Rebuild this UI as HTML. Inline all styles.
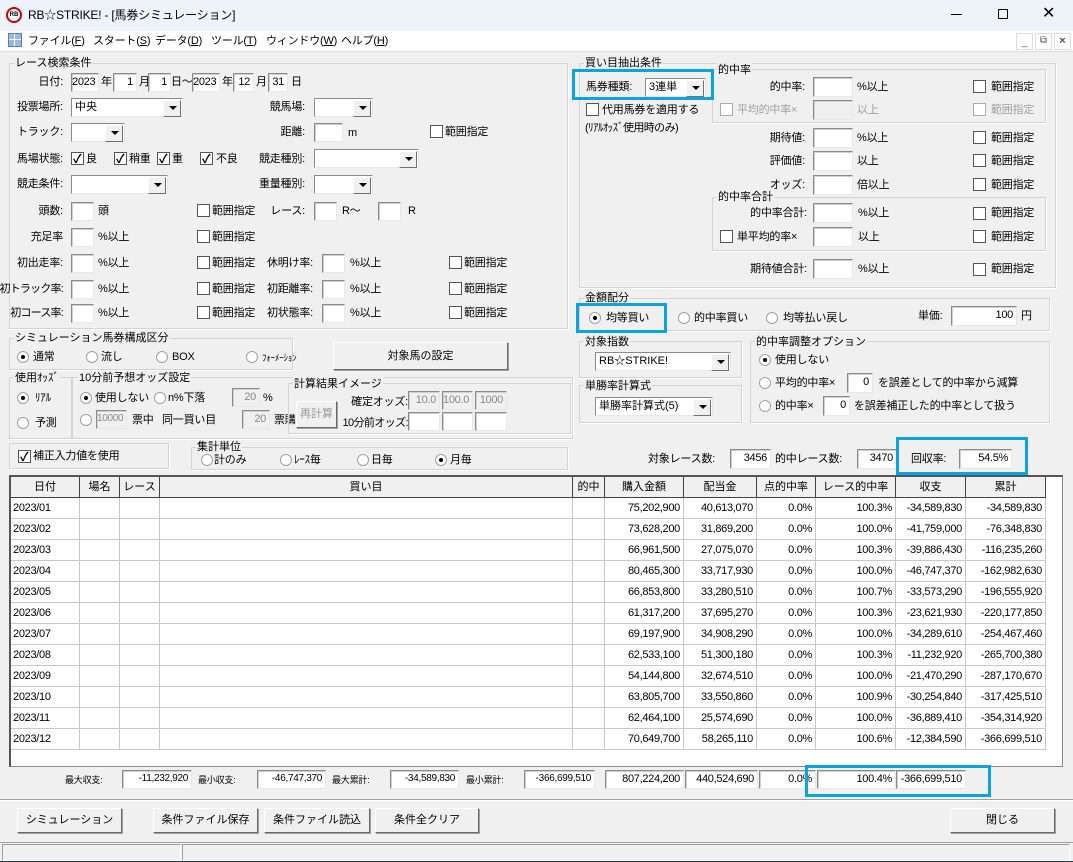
<!DOCTYPE html><html><head><meta charset="utf-8"><style>
*{box-sizing:border-box;margin:0;padding:0}
body{width:1073px;height:862px;position:relative;background:#f0f0f0;font-family:"Liberation Sans","Noto Sans CJK JP",sans-serif;font-size:11px;color:#000;overflow:hidden}
div{position:absolute}
.t{white-space:nowrap;line-height:14px;font-size:11px;letter-spacing:-0.2px}
.r{text-align:right}
.gr{color:#a0a0a0}
.i{background:#fff;border:1px solid;border-color:#8a8a8a #e8e8e8 #e8e8e8 #8a8a8a;box-shadow:inset 1px 1px 0 #d0d0d0;font-size:11px;line-height:16px;text-align:right;padding-right:3px;white-space:nowrap;letter-spacing:-0.3px}
.i.d{background:#f0f0f0;color:#888}
.c{background:#fff;border:1px solid;border-color:#8a8a8a #e8e8e8 #e8e8e8 #8a8a8a;height:19px;line-height:16px;padding-left:3px;white-space:nowrap;font-size:11px}
.c::after{content:"";position:absolute;right:1px;top:1px;width:16px;height:15px;background:#f0f0f0;border:1px solid;border-color:#fff #707070 #707070 #fff}
.c::before{content:"";position:absolute;right:5px;top:7px;border:4px solid transparent;border-top:4px solid #000;z-index:2;border-bottom:0}
.cb{width:13px;height:13px;background:#fff;border:1px solid #555}
.cb.k::after{content:"✓";position:absolute;left:1px;top:-3px;font-size:12px;font-weight:bold}
.cb.d{border-color:#aaa}
.rb{width:12px;height:12px;border-radius:50%;background:#fff;border:1px solid #a0a0a0}
.rb.k::after{content:"";position:absolute;left:3px;top:3px;width:4px;height:4px;border-radius:50%;background:#000}
.g{border:1px solid #d4d4d4;box-shadow:1px 1px 0 #fff}
.gt{background:#f0f0f0;padding:0 1px;line-height:14px;white-space:nowrap;font-size:11px}
.b{background:#f0f0f0;border:1px solid;border-color:#fff #696969 #696969 #fff;box-shadow:1px 1px 0 #a0a0a0;text-align:center;white-space:nowrap;font-size:11px}
.blue{border:3px solid #0aa3e6}
.gh{background:#f0f0f0;border-right:1px solid #444;border-bottom:1px solid #444;text-align:center;line-height:20px;height:21px;font-size:11px}
.gc{border-right:1px solid #c8c8c8;border-bottom:1px solid #c8c8c8;height:21px;line-height:20px;text-align:right;padding-right:3px;white-space:nowrap;font-size:11px;letter-spacing:-0.3px}
</style></head><body>
<div style="left:0;top:0;width:1073px;height:31px;background:#eef2f9"></div>
<div style="left:6px;top:7px;width:16px;height:16px;border-radius:50%;border:2px solid #c00;background:#fff;font-size:6px;line-height:12px;text-align:center;font-weight:bold">RB</div>
<div class="t" style="left:28px;top:8px;font-size:12px">RB☆STRIKE! - [馬券シミュレーション]</div>
<div style="left:951px;top:14px;width:11px;height:1px;background:#000"></div>
<div style="left:998px;top:9px;width:10px;height:10px;border:1px solid #000;border-radius:1px"></div>
<div class="t" style="left:1042px;top:5px;font-size:16px;line-height:18px">✕</div>
<div style="left:0;top:31px;width:1073px;height:20px;background:#fff"></div>
<div style="left:8px;top:33px;width:14px;height:14px;background:#9bb8e0;border:1px solid #5a7fb8;background-image:linear-gradient(#fff 0 0),linear-gradient(#fff 0 0);background-size:1px 100%,100% 1px;background-position:5px 0,0 5px;background-repeat:no-repeat"></div>
<div class="t" style="left:28px;top:34px">ファイル(<u>F</u>)</div>
<div class="t" style="left:93px;top:34px">スタート(<u>S</u>)</div>
<div class="t" style="left:155px;top:34px">データ(<u>D</u>)</div>
<div class="t" style="left:211px;top:34px">ツール(<u>T</u>)</div>
<div class="t" style="left:266px;top:34px">ウィンドウ(<u>W</u>)</div>
<div class="t" style="left:341px;top:34px">ヘルプ(<u>H</u>)</div>
<div style="left:1016px;top:33px;width:17px;height:17px;border:1px solid #ddd;font-size:10px;text-align:center;line-height:18px;color:#555">_</div>
<div style="left:1035px;top:33px;width:17px;height:17px;border:1px solid #ddd;font-size:10px;text-align:center;line-height:14px;color:#555">⧉</div>
<div style="left:1054px;top:33px;width:17px;height:17px;border:1px solid #ddd;font-size:11px;text-align:center;line-height:15px;color:#555;font-weight:bold">×</div>
<div style="left:0;top:51px;width:1073px;height:1px;background:#ddd"></div>

<div class="g" style="left:9px;top:63px;width:559px;height:266px"></div>
<div class="gt" style="left:14px;top:56px">レース検索条件</div>
<div class="t r" style="right:1010px;top:75px">日付:</div>
<div class="i" style="left:71px;top:73px;width:28px;height:19px">2023</div><div class="t" style="left:101px;top:75px">年</div>
<div class="i" style="left:113px;top:73px;width:24px;height:19px">1</div><div class="t" style="left:139px;top:75px">月</div>
<div class="i" style="left:148px;top:73px;width:23px;height:19px">1</div><div class="t" style="left:171px;top:75px">日～</div>
<div class="i" style="left:192px;top:73px;width:28px;height:19px">2023</div><div class="t" style="left:222px;top:75px">年</div>
<div class="i" style="left:233px;top:73px;width:21px;height:19px">12</div><div class="t" style="left:256px;top:75px">月</div>
<div class="i" style="left:268px;top:73px;width:20px;height:19px">31</div><div class="t" style="left:291px;top:75px">日</div>

<div class="t r" style="right:1010px;top:100px">投票場所:</div><div class="c" style="left:71px;top:98px;width:112px">中央</div>
<div class="t r" style="right:768px;top:100px">競馬場:</div><div class="c" style="left:314px;top:98px;width:59px"></div>
<div class="t r" style="right:1010px;top:125px">トラック:</div><div class="c" style="left:71px;top:123px;width:54px"></div>
<div class="t r" style="right:768px;top:125px">距離:</div><div class="i" style="left:314px;top:123px;width:29px;height:19px"></div><div class="t" style="left:348px;top:126px">m</div>
<div class="cb" style="left:430px;top:125px"></div><div class="t" style="left:445px;top:125px">範囲指定</div>
<div class="t r" style="right:1010px;top:152px">馬場状態:</div>
<div class="cb k" style="left:71px;top:152px"></div><div class="t" style="left:86px;top:152px">良</div>
<div class="cb k" style="left:114px;top:152px"></div><div class="t" style="left:129px;top:152px">稍重</div>
<div class="cb k" style="left:157px;top:152px"></div><div class="t" style="left:172px;top:152px">重</div>
<div class="cb k" style="left:200px;top:152px"></div><div class="t" style="left:216px;top:152px">不良</div>
<div class="t r" style="right:768px;top:152px">競走種別:</div><div class="c" style="left:314px;top:149px;width:105px"></div>
<div class="t r" style="right:1010px;top:177px">競走条件:</div><div class="c" style="left:71px;top:175px;width:97px"></div>
<div class="t r" style="right:768px;top:177px">重量種別:</div><div class="c" style="left:314px;top:175px;width:59px"></div>
<div class="t r" style="right:1010px;top:204px">頭数:</div><div class="i" style="left:71px;top:202px;width:23px;height:19px"></div><div class="t" style="left:98px;top:204px">頭</div>
<div class="cb" style="left:197px;top:204px"></div><div class="t" style="left:212px;top:204px">範囲指定</div>
<div class="t r" style="right:768px;top:204px">レース:</div><div class="i" style="left:314px;top:202px;width:23px;height:19px"></div><div class="t" style="left:342px;top:204px">R～</div>
<div class="i" style="left:378px;top:202px;width:23px;height:19px"></div><div class="t" style="left:408px;top:204px">R</div>
<div class="t r" style="right:1010px;top:230px">充足率</div><div class="i" style="left:71px;top:228px;width:23px;height:19px"></div><div class="t" style="left:98px;top:230px">%以上</div>
<div class="cb" style="left:197px;top:230px"></div><div class="t" style="left:212px;top:230px">範囲指定</div>
<div class="t r" style="right:1010px;top:256px">初出走率:</div><div class="i" style="left:71px;top:254px;width:23px;height:19px"></div><div class="t" style="left:98px;top:256px">%以上</div>
<div class="cb" style="left:197px;top:256px"></div><div class="t" style="left:212px;top:256px">範囲指定</div>
<div class="t r" style="right:760px;top:256px">休明け率:</div><div class="i" style="left:322px;top:254px;width:23px;height:19px"></div><div class="t" style="left:350px;top:256px">%以上</div>
<div class="cb" style="left:449px;top:256px"></div><div class="t" style="left:464px;top:256px">範囲指定</div>
<div class="t r" style="right:1010px;top:282px;letter-spacing:-0.8px">初トラック率:</div><div class="i" style="left:71px;top:280px;width:23px;height:19px"></div><div class="t" style="left:98px;top:282px">%以上</div>
<div class="cb" style="left:197px;top:282px"></div><div class="t" style="left:212px;top:282px">範囲指定</div>
<div class="t r" style="right:760px;top:282px">初距離率:</div><div class="i" style="left:322px;top:280px;width:23px;height:19px"></div><div class="t" style="left:350px;top:282px">%以上</div>
<div class="cb" style="left:449px;top:282px"></div><div class="t" style="left:464px;top:282px">範囲指定</div>
<div class="t r" style="right:1010px;top:306px;letter-spacing:-0.8px">初コース率:</div><div class="i" style="left:71px;top:304px;width:23px;height:19px"></div><div class="t" style="left:98px;top:306px">%以上</div>
<div class="cb" style="left:197px;top:306px"></div><div class="t" style="left:212px;top:306px">範囲指定</div>
<div class="t r" style="right:760px;top:306px">初状態率:</div><div class="i" style="left:322px;top:304px;width:23px;height:19px"></div><div class="t" style="left:350px;top:306px">%以上</div>
<div class="cb" style="left:449px;top:306px"></div><div class="t" style="left:464px;top:306px">範囲指定</div>

<div class="g" style="left:579px;top:63px;width:477px;height:225px"></div>
<div class="gt" style="left:584px;top:56px">買い目抽出条件</div>
<div class="g" style="left:712px;top:69px;width:334px;height:54px"></div>
<div class="gt" style="left:717px;top:63px">的中率</div>
<div class="blue" style="left:572px;top:69px;width:142px;height:31px"></div>
<div class="t" style="left:586px;top:80px">馬券種類:</div><div class="c" style="left:645px;top:78px;width:61px">3連単</div>
<div class="cb" style="left:586px;top:103px"></div><div class="t" style="left:602px;top:103px">代用馬券を適用する</div>
<div class="t" style="left:585px;top:121px;letter-spacing:-0.6px">(ﾘｱﾙｵｯｽﾞ使用時のみ)</div>
<div class="t r" style="right:268px;top:80px">的中率:</div><div class="i" style="left:813px;top:77px;width:40px;height:20px"></div><div class="t" style="left:857px;top:80px">%以上</div>
<div class="cb" style="left:973px;top:80px"></div><div class="t" style="left:991px;top:80px">範囲指定</div>
<div class="cb d" style="left:720px;top:103px"></div><div class="t gr" style="left:737px;top:103px">平均的中率×</div><div class="i" style="left:813px;top:100px;width:40px;height:20px;background:#f0f0f0"></div><div class="t gr" style="left:857px;top:103px">以上</div>
<div class="cb d" style="left:973px;top:103px"></div><div class="t gr" style="left:991px;top:103px">範囲指定</div>
<div class="t r" style="right:268px;top:131px">期待値:</div><div class="i" style="left:813px;top:128px;width:40px;height:20px"></div><div class="t" style="left:857px;top:131px">%以上</div>
<div class="cb" style="left:973px;top:131px"></div><div class="t" style="left:991px;top:131px">範囲指定</div>
<div class="t r" style="right:268px;top:154px">評価値:</div><div class="i" style="left:813px;top:151px;width:40px;height:20px"></div><div class="t" style="left:857px;top:154px">以上</div>
<div class="cb" style="left:973px;top:154px"></div><div class="t" style="left:991px;top:154px">範囲指定</div>
<div class="t r" style="right:268px;top:178px">オッズ:</div><div class="i" style="left:813px;top:175px;width:40px;height:20px"></div><div class="t" style="left:857px;top:178px">倍以上</div>
<div class="cb" style="left:973px;top:178px"></div><div class="t" style="left:991px;top:178px">範囲指定</div>
<div class="g" style="left:712px;top:197px;width:334px;height:54px"></div>
<div class="gt" style="left:717px;top:190px">的中率合計</div>
<div class="t r" style="right:266px;top:206px">的中率合計:</div><div class="i" style="left:813px;top:203px;width:40px;height:20px"></div><div class="t" style="left:858px;top:206px">%以上</div>
<div class="cb" style="left:973px;top:207px"></div><div class="t" style="left:991px;top:206px">範囲指定</div>
<div class="cb" style="left:720px;top:230px"></div><div class="t" style="left:737px;top:230px">単平均的率×</div><div class="i" style="left:813px;top:227px;width:40px;height:20px"></div><div class="t" style="left:858px;top:230px">以上</div>
<div class="cb" style="left:973px;top:230px"></div><div class="t" style="left:991px;top:230px">範囲指定</div>
<div class="t r" style="right:266px;top:262px">期待値合計:</div><div class="i" style="left:813px;top:259px;width:40px;height:20px"></div><div class="t" style="left:858px;top:262px">%以上</div>
<div class="cb" style="left:973px;top:263px"></div><div class="t" style="left:991px;top:262px">範囲指定</div>

<div class="g" style="left:579px;top:298px;width:471px;height:33px"></div>
<div class="gt" style="left:584px;top:291px">金額配分</div>
<div class="blue" style="left:576px;top:303px;width:91px;height:30px"></div>
<div class="rb k" style="left:589px;top:312px"></div><div class="t" style="left:606px;top:311px">均等買い</div>
<div class="rb" style="left:678px;top:312px"></div><div class="t" style="left:694px;top:311px">的中率買い</div>
<div class="rb" style="left:766px;top:312px"></div><div class="t" style="left:783px;top:311px">均等払い戻し</div>
<div class="t" style="left:918px;top:309px">単価:</div><div class="i" style="left:951px;top:306px;width:66px;height:20px">100</div><div class="t" style="left:1021px;top:309px">円</div>

<div class="g" style="left:579px;top:341px;width:163px;height:37px"></div>
<div class="gt" style="left:584px;top:335px">対象指数</div>
<div class="c" style="left:595px;top:352px;width:136px">RB☆STRIKE!</div>
<div class="g" style="left:579px;top:385px;width:163px;height:38px"></div>
<div class="gt" style="left:584px;top:379px">単勝率計算式</div>
<div class="c" style="left:595px;top:397px;width:118px">単勝率計算式(5)</div>
<div class="g" style="left:750px;top:341px;width:300px;height:82px"></div>
<div class="gt" style="left:755px;top:335px">的中率調整オプション</div>
<div class="rb k" style="left:759px;top:354px"></div><div class="t" style="left:775px;top:353px">使用しない</div>
<div class="rb" style="left:759px;top:377px"></div><div class="t" style="left:775px;top:376px">平均的中率×</div><div class="i" style="left:847px;top:373px;width:26px;height:20px">0</div><div class="t" style="left:878px;top:376px">を誤差として的中率から減算</div>
<div class="rb" style="left:759px;top:400px"></div><div class="t" style="left:775px;top:399px">的中率×</div><div class="i" style="left:823px;top:396px;width:27px;height:20px">0</div><div class="t" style="left:854px;top:399px">を誤差補正した的中率として扱う</div>

<div class="t" style="left:648px;top:452px">対象レース数:</div><div class="i" style="left:730px;top:449px;width:41px;height:20px">3456</div>
<div class="t" style="left:775px;top:452px">的中レース数:</div><div class="i" style="left:857px;top:449px;width:40px;height:20px">3470</div>
<div class="blue" style="left:896px;top:437px;width:132px;height:38px"></div>
<div class="t" style="left:911px;top:452px">回収率:</div><div class="i" style="left:959px;top:449px;width:53px;height:20px">54.5%</div>

<div class="g" style="left:9px;top:338px;width:284px;height:32px"></div>
<div class="gt" style="left:14px;top:331px">シミュレーション馬券構成区分</div>
<div class="rb k" style="left:17px;top:351px"></div><div class="t" style="left:33px;top:350px">通常</div>
<div class="rb" style="left:86px;top:351px"></div><div class="t" style="left:101px;top:350px">流し</div>
<div class="rb" style="left:156px;top:351px"></div><div class="t" style="left:172px;top:350px">BOX</div>
<div class="rb" style="left:246px;top:351px"></div><div class="t" style="left:262px;top:351px;font-size:9px">ﾌｫｰﾒｰｼｮﾝ</div>
<div class="b" style="left:333px;top:342px;width:175px;height:28px;line-height:26px">対象馬の設定</div>

<div class="g" style="left:9px;top:377px;width:63px;height:62px"></div>
<div class="gt" style="left:14px;top:371px">使用ｵｯｽﾞ</div>
<div class="rb k" style="left:17px;top:392px"></div><div class="t" style="left:35px;top:391px">ﾘｱﾙ</div>
<div class="rb" style="left:17px;top:417px"></div><div class="t" style="left:35px;top:416px">予測</div>
<div class="g" style="left:72px;top:377px;width:501px;height:62px"></div>
<div class="gt" style="left:78px;top:371px">10分前予想オッズ設定</div>
<div class="rb k" style="left:80px;top:392px"></div><div class="t" style="left:95px;top:391px">使用しない</div>
<div class="rb" style="left:154px;top:392px"></div><div class="t" style="left:168px;top:391px">n%下落</div>
<div class="i d" style="left:232px;top:388px;width:28px;height:19px">20</div><div class="t" style="left:263px;top:391px">%</div>
<div class="rb" style="left:80px;top:414px"></div><div class="i d" style="left:96px;top:410px;width:31px;height:19px;font-size:10px">10000</div><div class="t" style="left:132px;top:413px">票中</div>
<div class="t" style="left:162px;top:413px">同一買い目</div><div class="i d" style="left:242px;top:410px;width:28px;height:19px">20</div><div class="t" style="left:274px;top:413px">票購入</div>
<div class="g" style="left:288px;top:383px;width:283px;height:51px"></div>
<div class="gt" style="left:293px;top:377px">計算結果イメージ</div>
<div class="b" style="left:296px;top:401px;width:41px;height:27px;line-height:25px;color:#999">再計算</div>
<div class="t r" style="right:665px;top:395px">確定オッズ:</div>
<div class="i d" style="left:408px;top:391px;width:32px;height:19px">10.0</div><div class="i d" style="left:442px;top:391px;width:31px;height:19px">100.0</div><div class="i d" style="left:475px;top:391px;width:32px;height:19px">1000</div>
<div class="t r" style="right:665px;top:416px;letter-spacing:-0.6px">10分前オッズ:</div>
<div class="i" style="left:408px;top:412px;width:32px;height:19px"></div><div class="i" style="left:442px;top:412px;width:31px;height:19px"></div><div class="i" style="left:475px;top:412px;width:32px;height:19px"></div>

<div class="g" style="left:9px;top:443px;width:160px;height:26px"></div>
<div class="cb k" style="left:18px;top:450px"></div><div class="t" style="left:33px;top:449px">補正入力値を使用</div>
<div class="g" style="left:191px;top:447px;width:377px;height:23px"></div>
<div class="gt" style="left:196px;top:440px">集計単位</div>
<div class="rb" style="left:201px;top:454px"></div><div class="t" style="left:214px;top:453px">計のみ</div>
<div class="rb" style="left:280px;top:454px"></div><div class="t" style="left:294px;top:453px">ﾚｰｽ毎</div>
<div class="rb" style="left:357px;top:454px"></div><div class="t" style="left:371px;top:453px">日毎</div>
<div class="rb k" style="left:435px;top:454px"></div><div class="t" style="left:450px;top:453px">月毎</div>

<div style="left:9px;top:475px;width:1054px;height:292px;background:#fff;border:1px solid #888;border-left:2px solid #555;border-top:2px solid #555"></div>
<div id="grid" style="left:11px;top:477px;width:1040px;height:280px"></div>

<div class="t" style="left:65px;top:773px;font-size:9px">最大収支:</div><div class="i" style="left:122px;top:770px;width:70px;height:19px;font-size:10px">-11,232,920</div>
<div class="t" style="left:198px;top:773px;font-size:9px">最小収支:</div><div class="i" style="left:257px;top:770px;width:69px;height:19px;font-size:10px">-46,747,370</div>
<div class="t" style="left:332px;top:773px;font-size:9px">最大累計:</div><div class="i" style="left:390px;top:770px;width:69px;height:19px;font-size:10px">-34,589,830</div>
<div class="t" style="left:466px;top:773px;font-size:9px">最小累計:</div><div class="i" style="left:524px;top:770px;width:71px;height:19px;font-size:10px">-366,699,510</div>
<div class="i" style="left:605px;top:770px;width:79px;height:19px">807,224,200</div>
<div class="i" style="left:685px;top:770px;width:73px;height:19px">440,524,690</div>
<div class="i" style="left:759px;top:770px;width:57px;height:19px">0.0%</div>
<div class="i" style="left:817px;top:770px;width:79px;height:19px">100.4%</div>
<div class="i" style="left:896px;top:770px;width:70px;height:19px">-366,699,510</div>
<div class="blue" style="left:805px;top:765px;width:186px;height:32px"></div>
<div style="left:0;top:799px;width:1073px;height:1px;background:#a0a0a0"></div>
<div style="left:0;top:800px;width:1073px;height:1px;background:#fff"></div>

<div class="b" style="left:17px;top:808px;width:105px;height:25px;line-height:23px">シミュレーション</div>
<div class="b" style="left:153px;top:808px;width:105px;height:25px;line-height:23px">条件ファイル保存</div>
<div class="b" style="left:264px;top:808px;width:106px;height:25px;line-height:23px">条件ファイル読込</div>
<div class="b" style="left:375px;top:808px;width:104px;height:25px;line-height:23px">条件全クリア</div>
<div class="b" style="left:950px;top:808px;width:105px;height:25px;line-height:23px">閉じる</div>
<div style="left:0;top:842px;width:1073px;height:1px;background:#a0a0a0"></div>
<div style="left:2px;top:844px;width:179px;height:17px;border:1px solid;border-color:#a0a0a0 #fff #fff #a0a0a0"></div>
<div style="left:182px;top:844px;width:888px;height:17px;border:1px solid;border-color:#a0a0a0 #fff #fff #a0a0a0"></div>
<div style="left:0;top:861px;width:1073px;height:1px;background:#1e3a5f"></div>

<script>
var cols=[[0,69,"日付"],[69,40,"場名"],[109,40,"レース"],[149,413,"買い目"],[562,32,"的中"],[594,79,"購入金額"],[673,73,"配当金"],[746,59,"点的中率"],[805,80,"レース的中率"],[885,70,"収支"],[955,80,"累計"]];
var rows=[["75,202,900","40,613,070","100.3%","-34,589,830","-34,589,830"],["73,628,200","31,869,200","100.0%","-41,759,000","-76,348,830"],["66,961,500","27,075,070","100.3%","-39,886,430","-116,235,260"],["80,465,300","33,717,930","100.0%","-46,747,370","-162,982,630"],["66,853,800","33,280,510","100.7%","-33,573,290","-196,555,920"],["61,317,200","37,695,270","100.3%","-23,621,930","-220,177,850"],["69,197,900","34,908,290","100.0%","-34,289,610","-254,467,460"],["62,533,100","51,300,180","100.3%","-11,232,920","-265,700,380"],["54,144,800","32,674,510","100.0%","-21,470,290","-287,170,670"],["63,805,700","33,550,860","100.9%","-30,254,840","-317,425,510"],["62,464,100","25,574,690","100.0%","-36,889,410","-354,314,920"],["70,649,700","58,265,110","100.6%","-12,384,590","-366,699,510"]];
var h="";
cols.forEach(function(c){h+='<div class="gh" style="left:'+c[0]+'px;top:0;width:'+c[1]+'px">'+c[2]+'</div>';});
rows.forEach(function(r,i){var y=21+i*21;var m=i+1;var v=["2023/"+(m<10?"0"+m:m),"","","","",r[0],r[1],"0.0%",r[2],r[3],r[4]];
cols.forEach(function(c,j){h+='<div class="gc" style="left:'+c[0]+'px;top:'+y+'px;width:'+c[1]+'px;'+(j==0?'text-align:left;padding-left:2px':'')+'">'+v[j]+'</div>';});});
document.getElementById("grid").innerHTML=h;
</script>
</body></html>
